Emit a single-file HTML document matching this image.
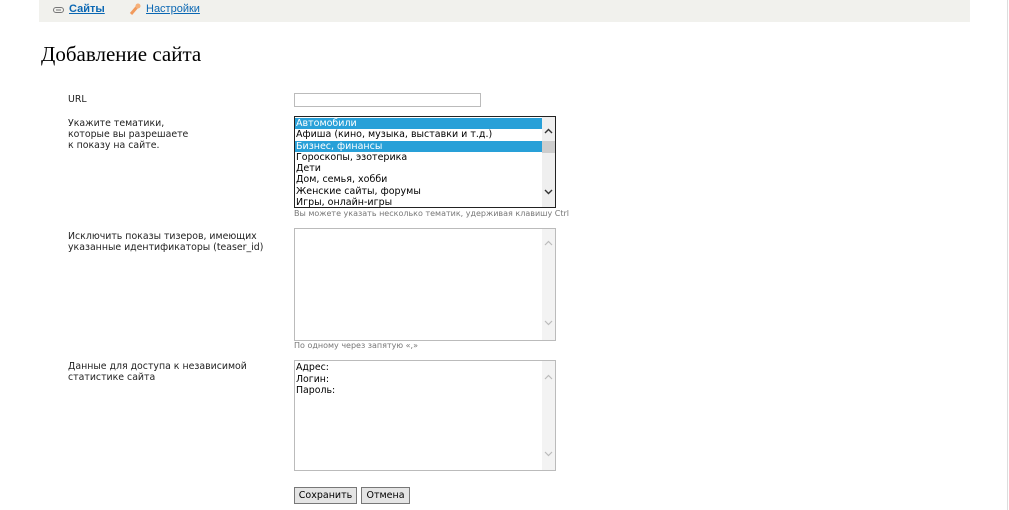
<!DOCTYPE html>
<html><head><meta charset="utf-8"><style>
body{margin:0;background:#fff;width:1009px;height:510px;overflow:hidden;position:relative;font-family:"DejaVu Sans","Liberation Sans",sans-serif;font-size:10px;color:#222}
.hdr{position:absolute;left:39px;top:0;width:931px;height:22px;background:#f1f1ed}
.hdr a{position:absolute;top:3px;color:#0a67b3;font-size:11px;text-decoration:underline;font-family:"Liberation Sans",sans-serif}
h1{position:absolute;left:41px;top:42px;margin:0;font:21px "Liberation Serif",serif;color:#000}
.lbl{position:absolute;left:68px;font-size:9.4px;line-height:11px;color:#222}
.box{position:absolute;box-sizing:border-box;background:#fff}
.hint{position:absolute;left:294px;font-size:8px;color:#777}
.opt{height:11.3px;line-height:11.3px;padding-left:1px;font-size:9.5px;white-space:nowrap;color:#000}
.sel{background:#28a0d8;color:#fff}
.btn{position:absolute;top:487px;height:17px;box-sizing:border-box;border:1px solid #777;background:#e4e4e4;font-size:9.5px;line-height:15px;text-align:center;color:#000}
.sb{position:absolute;right:0;top:0;width:13px;bottom:0;background:#f3f3f3}
.sb svg{position:absolute;left:2px}
</style></head><body>
<div class="hdr">
<svg style="position:absolute;left:14px;top:7px" width="11" height="6"><rect x="0.5" y="0.5" width="10" height="5" rx="2.5" fill="none" stroke="#777"/><line x1="3" y1="3" x2="8" y2="3" stroke="#777"/></svg>
<a style="left:30px;font-weight:bold">Сайты</a>
<svg style="position:absolute;left:90px;top:3px" width="12" height="13"><line x1="2" y1="11" x2="8" y2="4" stroke="#f19a5c" stroke-width="3"/><circle cx="9" cy="3" r="2.5" fill="#f5b07a"/></svg>
<a style="left:107px">Настройки</a>
</div>
<div style="position:absolute;left:1007px;top:0;width:1px;height:510px;background:#ddd"></div>
<h1>Добавление сайта</h1>

<div class="lbl" style="top:94px">URL</div>
<div class="box" style="left:294px;top:93px;width:187px;height:14px;border:1px solid #bbb"></div>

<div class="lbl" style="top:118px">Укажите тематики,<br>которые вы разрешаете<br>к показу на сайте.</div>
<div class="box" style="left:294px;top:116px;width:262px;height:92px;border:1px solid #222;overflow:hidden;padding-top:1px">
<div class="sb" style="background:#efefef"><svg style="top:11px" width="9" height="6"><path d="M1 5L4.5 1.5L8 5" fill="none" stroke="#333" stroke-width="1.4"/></svg><div style="position:absolute;top:24px;left:0;width:13px;height:12px;background:#cdcdcd"></div><svg style="top:72px" width="9" height="6"><path d="M1 1L4.5 4.5L8 1" fill="none" stroke="#333" stroke-width="1.4"/></svg></div>
<div class="opt sel" style="margin-right:13px">Автомобили</div>
<div class="opt">Афиша (кино, музыка, выставки и т.д.)</div>
<div class="opt sel" style="margin-right:13px">Бизнес, финансы</div>
<div class="opt">Гороскопы, эзотерика</div>
<div class="opt">Дети</div>
<div class="opt">Дом, семья, хобби</div>
<div class="opt">Женские сайты, форумы</div>
<div class="opt">Игры, онлайн-игры</div>
</div>
<div class="hint" style="top:209px">Вы можете указать несколько тематик, удерживая клавишу Ctrl</div>

<div class="lbl" style="top:231px">Исключить показы тизеров, имеющих<br>указанные идентификаторы (teaser_id)</div>
<div class="box" style="left:294px;top:228px;width:262px;height:113px;border:1px solid #bbb"><div class="sb"><svg style="top:11px" width="9" height="6"><path d="M1 5L4.5 1.5L8 5" fill="none" stroke="#bbb" stroke-width="1.2"/></svg><svg style="top:91px" width="9" height="6"><path d="M1 1L4.5 4.5L8 1" fill="none" stroke="#bbb" stroke-width="1.2"/></svg></div></div>
<div class="hint" style="top:341px">По одному через запятую «,»</div>

<div class="lbl" style="top:361px">Данные для доступа к независимой<br>статистике сайта</div>
<div class="box" style="left:294px;top:360px;width:262px;height:111px;border:1px solid #bbb;padding:1px 1px;font-size:9.4px;line-height:11.5px;color:#000">Адрес:<br>Логин:<br>Пароль:<div class="sb"><svg style="top:13px" width="9" height="6"><path d="M1 5L4.5 1.5L8 5" fill="none" stroke="#bbb" stroke-width="1.2"/></svg><svg style="top:90px" width="9" height="6"><path d="M1 1L4.5 4.5L8 1" fill="none" stroke="#bbb" stroke-width="1.2"/></svg></div></div>

<div class="btn" style="left:294px;width:63px">Сохранить</div>
<div class="btn" style="left:361px;width:49px">Отмена</div>
</body></html>
